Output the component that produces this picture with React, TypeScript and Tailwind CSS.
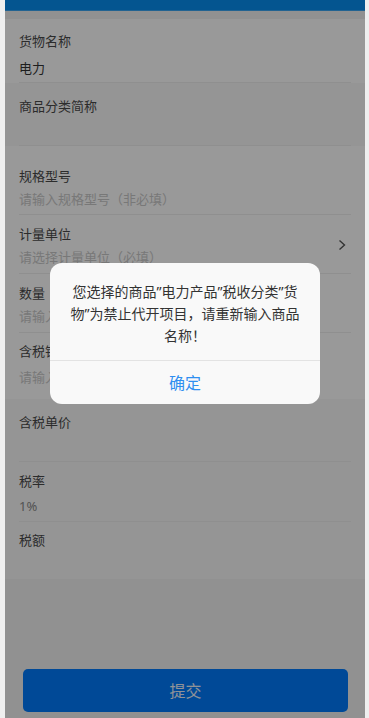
import React from "react";

const font = { fontFamily: '"Noto Sans", "Noto Sans CJK SC", sans-serif' };

function Field({
  label,
  value,
  placeholder,
  className = "",
  valueClass = "mt-[3px]",
  valueColor = "text-[#333]",
  border = true,
  arrow = false,
}: {
  label: string;
  value?: string;
  placeholder?: string;
  className?: string;
  valueClass?: string;
  valueColor?: string;
  border?: boolean;
  arrow?: boolean;
}) {
  return (
    <div className={`mx-[14px] relative ${border ? "border-b border-[#eeeeee]" : ""} ${className}`}>
      <div className="text-[13px] leading-[20px] text-[#4a4a4a]">{label}</div>
      <div
        className={`text-[13px] leading-[20px] h-[20px] ${valueClass} ${
          value ? valueColor : "text-[#c9c9c9]"
        }`}
      >
        {value || placeholder}
      </div>
      {arrow && (
        <svg
          className="absolute right-[5px] top-[24px]"
          width="8"
          height="12"
          viewBox="0 0 8 12"
          fill="none"
          stroke="#555"
          strokeWidth="1.4"
        >
          <path d="M1.5 1.5 6.5 6 1.5 10.5" />
        </svg>
      )}
    </div>
  );
}

export default function App() {
  return (
    <div className="min-h-[718px] bg-[#efefef] pl-[5px] pr-[4px]" style={font}>
      <div className="relative h-[718px] w-[360px] bg-[#f2f2f2] overflow-hidden flex flex-col">
        {/* HEADER */}
        <div className="h-[11px] bg-[#088ef0] border-b border-[#3aa5f2]" />

        <div className="mt-[8px] bg-white">
          <Field label="货物名称" value="电力" className="pt-3 pb-[4px]" valueClass="mt-[7px]" />
        </div>

        <div className="bg-[#f8f8f8]">
          <Field label="商品分类简称" className="pt-[13px] pb-[2px]" valueClass="mt-[7px]" />
        </div>

        {/* EDITABLE */}
        <div className="bg-white">
          <Field
            label="规格型号"
            placeholder="请输入规格型号（非必填）"
            className="pt-[20px] pb-[5px]"
          />
          <Field
            label="计量单位"
            placeholder="请选择计量单位（必填）"
            className="pt-[9px] pb-[6px]"
            arrow
          />
          <Field label="数量" placeholder="请输入数量（必填）" className="pt-[9px] pb-[6px]" />
          <Field
            label="含税销售额"
            placeholder="请输入含税销售额(必填)"
            className="pt-[8px] pb-[12px]"
            valueClass="mt-[6px]"
            border={false}
          />
        </div>

        {/* READONLY */}
        <div className="bg-[#f8f8f8]">
          <Field label="含税单价" className="pt-[13px] pb-[6px]" />
          <Field
            label="税率"
            value="1%"
            valueColor="text-[#8a8a8a]"
            className="pt-[9px] pb-[5px]"
            valueClass="mt-[5px]"
          />
          <Field label="税额" className="pt-[8px] pb-[6px]" border={false} />
        </div>

        <div className="flex-1" />

        <div className="px-[18px] pb-[6px] pr-[17px]">
          <button className="w-full h-[43px] rounded-[5px] bg-[#007bfc] text-[#eef3fc] text-[16px]">
            提交
          </button>
        </div>

        {/* OVERLAY */}
        <div className="absolute inset-0 bg-black/40" />

        {/* DIALOG */}
        <div className="absolute left-[45px] top-[263px] w-[270px] rounded-[12px] bg-[#f9f9f9] overflow-hidden">
          <div className="px-[19px] pt-[18px] pb-[13px] text-center text-[14px] leading-[22px] text-[#333]">
            您选择的商品”电力产品”税收分类”货物”为禁止代开项目，请重新输入商品名称！
          </div>
          <div className="border-t border-[#e3e3e3] h-[44px] flex items-center justify-center text-[16px] text-[#2f8ff0]">
            确定
          </div>
        </div>
      </div>
    </div>
  );
}
